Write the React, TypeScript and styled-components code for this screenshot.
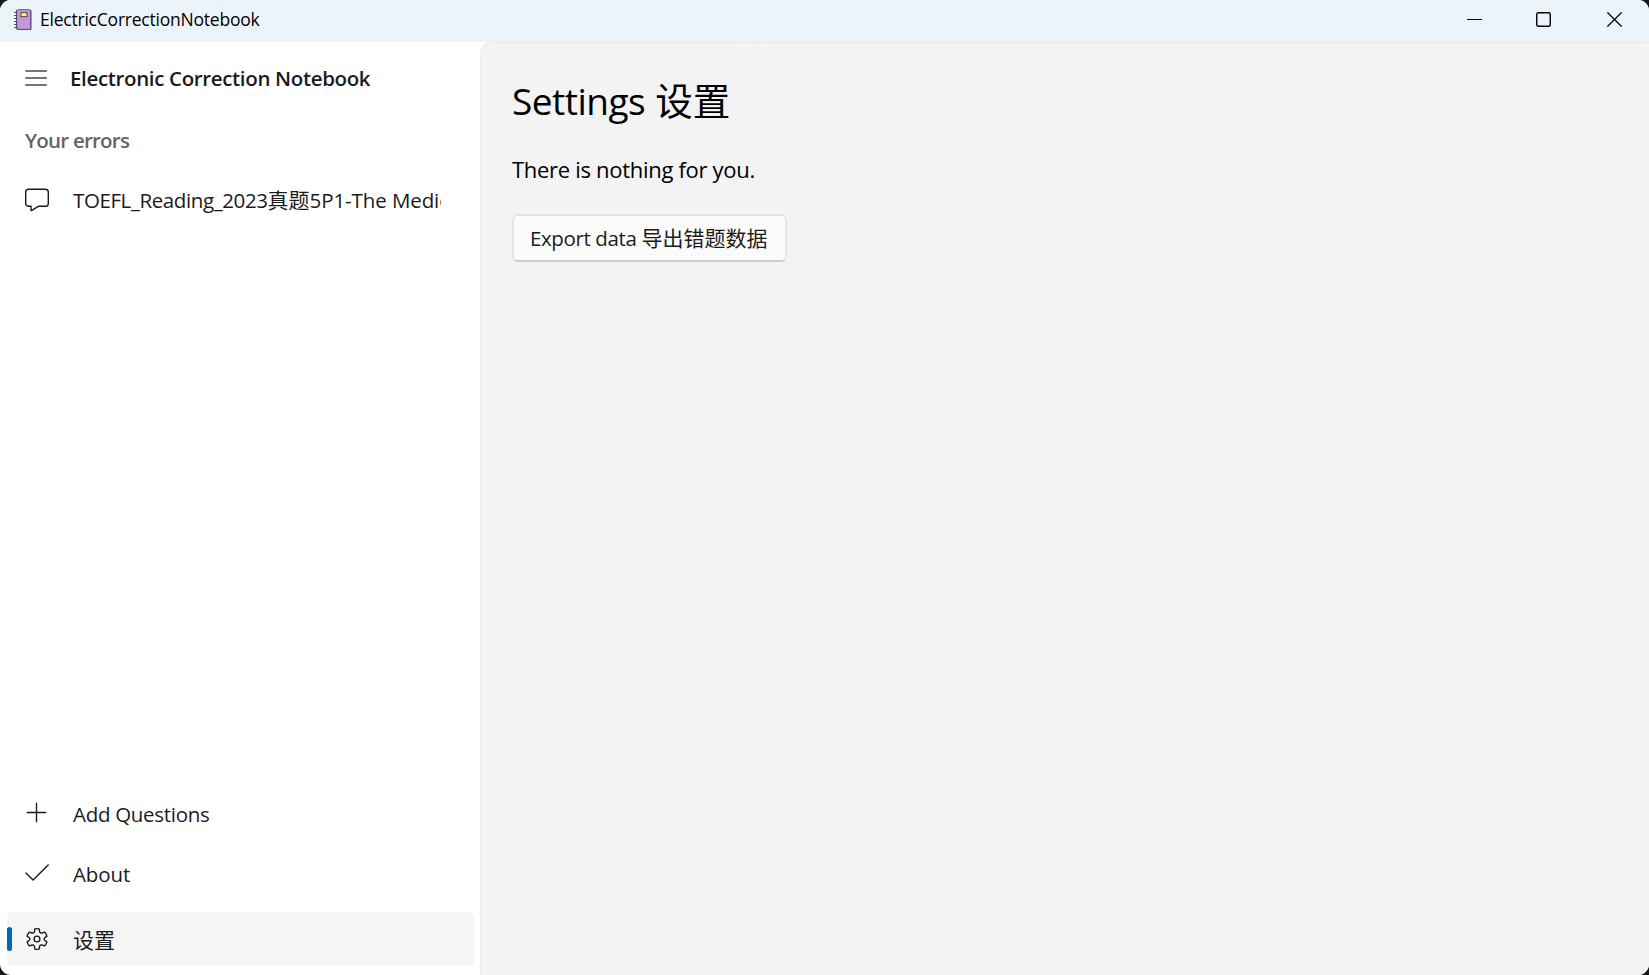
import React from "react";
import styled, { createGlobalStyle } from "styled-components";

const GlobalStyle = createGlobalStyle`
  * { box-sizing: border-box; }
  body { margin: 0; background: #17181c; overflow: hidden; }
  button { font: inherit; color: inherit; border: 0; background: none; padding: 0; margin: 0; text-align: left; }
  svg { display: block; flex: none; }
`;

const Window = styled.div`
  width: 100vw;
  height: 100vh;
  display: flex;
  flex-direction: column;
  overflow: hidden;
  border-radius: 11px;
  background: #fff;
  color: #1b1b1b;
  font-family: "Open Sans", "Noto Sans CJK SC", sans-serif;
`;

const TitleBar = styled.header`
  flex: none;
  height: 42px;
  display: flex;
  justify-content: space-between;
  background: linear-gradient(90deg, #ecf4fa, #ebf3fb 45%, #ebf4fa);
`;

const AppIdentity = styled.div`
  height: 39px;
  display: flex;
  align-items: center;
  gap: 7px;
  padding-left: 13px;
`;

const Text = styled.span<{ $size: number; $spacing?: number; $weight?: number; $color?: string }>`
  font-size: ${(p) => p.$size}px;
  letter-spacing: ${(p) => p.$spacing ?? 0}px;
  font-weight: ${(p) => p.$weight ?? 400};
  color: ${(p) => p.$color ?? "#1b1b1b"};
  line-height: 1.2;
  white-space: nowrap;
`;

const Cjk = styled.span<{ $size: number; $lead?: number }>`
  font-family: "Noto Sans CJK SC", sans-serif;
  font-size: ${(p) => p.$size}px;
  margin-left: ${(p) => p.$lead ?? 0}px;
  letter-spacing: 0;
  line-height: 1;
`;

const WindowControls = styled.div`
  display: flex;
  align-items: center;
  height: 39px;
  padding-right: 27px;
`;

const ControlButton = styled.button<{ $gap?: number }>`
  width: 15px;
  height: 39px;
  margin-right: ${(p) => p.$gap ?? 0}px;
  display: flex;
  align-items: center;
  justify-content: center;
`;

const Body = styled.div`
  flex: 1;
  min-height: 0;
  display: flex;
`;

const Sidebar = styled.nav`
  flex: none;
  width: 480px;
  display: flex;
  flex-direction: column;
  padding: 6px 6px 6px 7px;
`;

const PaneHeader = styled.div`
  height: 60px;
  display: flex;
  align-items: center;
  gap: 22px;
  padding-left: 18px;
`;

const SectionTitle = styled.div`
  height: 62px;
  display: flex;
  align-items: center;
  padding: 2px 0 0 18px;
`;

const Spacer = styled.div`
  flex: 1;
`;

const NavItem = styled.button<{ $selected?: boolean }>`
  flex: none;
  width: 467px;
  height: 54px;
  margin: ${(p) => (p.$selected ? "8px 0 3px" : "3px 0")};
  display: flex;
  align-items: center;
  border-radius: 6px;
  background: ${(p) => (p.$selected ? "#f5f5f5" : "transparent")};
`;

const Indicator = styled.span<{ $visible?: boolean }>`
  width: 5px;
  height: 24px;
  border-radius: 2.5px;
  background: ${(p) => (p.$visible ? "#0067c0" : "transparent")};
`;

const IconSlot = styled.span`
  width: 24px;
  margin: 0 24px 0 13px;
  display: flex;
`;

const NavLabel = styled.span`
  width: 368px;
  height: 40px;
  overflow: hidden;
  display: flex;
  align-items: center;
`;

const Content = styled.main`
  flex: 1;
  display: flex;
  flex-direction: column;
  align-items: flex-start;
  padding: 31px 31px 0;
  background: #f3f3f3;
  border: solid #e9e9e9;
  border-width: 1px 0 0 1px;
  border-top-left-radius: 12px;
`;

const Title = styled.h1`
  margin: 0;
  height: 54px;
  display: flex;
  align-items: center;
`;

const Message = styled.p`
  margin: 24px 0 0;
  height: 34px;
  display: flex;
  align-items: center;
`;

const ExportButton = styled.button`
  width: 275px;
  height: 48px;
  margin-top: 28px;
  padding-left: 16px;
  display: flex;
  align-items: center;
  background: #fbfbfb;
  border: 2px solid #e5e5e5;
  border-bottom-color: #cccccc;
  border-radius: 6px;
`;

const NotebookIcon = () => (
  <svg width="20" height="22" viewBox="0 0 20 22">
    <rect x="3.5" y="0.7" width="14.2" height="19.8" rx="1.2" fill="#be9ade" stroke="#6d5287" />
    <path d="M17.9 1.4V20.4H4" fill="none" stroke="#60456f" strokeWidth="1" />
    <rect x="8" y="3.6" width="6" height="4" fill="#fff06c" stroke="#5a4a3c" />
    <path d="M1 3.5H4.5M1 6.5H4.5M1 9.5H4.5M1 12.5H4.5M1 15.5H4.5M1 18.5H4.5" stroke="#555" strokeWidth="1.2" />
    <path d="M3.5 1V20" stroke="#534268" strokeWidth="1" strokeDasharray="2 1" />
  </svg>
);

const MinimizeIcon = () => (
  <svg width="15" height="15" viewBox="0 0 15 15">
    <path d="M0 7.5H15" stroke="#000" />
  </svg>
);

const MaximizeIcon = () => (
  <svg width="15" height="15" viewBox="0 0 15 15">
    <rect x="0.75" y="0.75" width="13.5" height="13.5" rx="1.5" fill="none" stroke="#000" strokeWidth="1.4" />
  </svg>
);

const CloseIcon = () => (
  <svg width="15" height="15" viewBox="0 0 15 15">
    <path d="M0.4 0.4L14.6 14.6M14.6 0.4L0.4 14.6" stroke="#000" strokeWidth="1.3" />
  </svg>
);

const MenuIcon = () => (
  <svg width="23" height="18" viewBox="0 0 23 18">
    <path d="M0.8 2H21.4M0.8 9H21.4M0.8 16H21.4" stroke="#4a4a4a" strokeWidth="1.4" strokeLinecap="round" />
  </svg>
);

const navIcon = {
  width: 24,
  height: 24,
  viewBox: "0 0 24 24",
  fill: "none",
  stroke: "#1b1b1b",
  strokeWidth: 1.4,
  strokeLinejoin: "round" as const,
  strokeLinecap: "round" as const,
};

const CommentIcon = () => (
  <svg {...navIcon}>
    <path d="M3.6 1.2H20.4A2.9 2.9 0 0 1 23.3 4.1V15.4A2.9 2.9 0 0 1 20.4 18.3H13.3L6.8 22.4Q6 22.8 6 22V18.3H3.6A2.9 2.9 0 0 1 0.7 15.4V4.1A2.9 2.9 0 0 1 3.6 1.2Z" />
  </svg>
);

const AddIcon = () => (
  <svg {...navIcon}>
    <path d="M11.5 1.3V19.7M2.3 10.5H20.7" />
  </svg>
);

const AcceptIcon = () => (
  <svg {...navIcon}>
    <path d="M0.9 10.9L8.1 18L23.2 3" />
  </svg>
);

const SettingsIcon = () => (
  <svg {...navIcon} strokeWidth="1.4">
    <path
      transform="translate(0 1)"
      d="M9.9 0.9Q12 0.4 14.1 0.9L14.6 3.7A1.7 1.7 0 0 0 16.9 5L19.6 4.1Q21.3 5.8 21.9 8.1L19.7 9.8A1.6 1.6 0 0 0 19.7 12.2L21.9 13.9Q21.3 16.2 19.6 17.9L16.9 17A1.7 1.7 0 0 0 14.6 18.3L14.1 21.1Q12 21.6 9.9 21.1L9.4 18.3A1.7 1.7 0 0 0 7.1 17L4.4 17.9Q2.7 16.2 2.1 13.9L4.3 12.2A1.6 1.6 0 0 0 4.3 9.8L2.1 8.1Q2.7 5.8 4.4 4.1L7.1 5A1.7 1.7 0 0 0 9.4 3.7Z"
    />
    <circle cx="12" cy="12" r="2.9" />
  </svg>
);

export default function App() {
  return (
    <>
      <GlobalStyle />
      <Window>
        <TitleBar>
          <AppIdentity>
            <NotebookIcon />
            <Text $size={17.5} $spacing={-0.22} $color="#000">ElectricCorrectionNotebook</Text>
          </AppIdentity>
          <WindowControls>
            <ControlButton aria-label="Minimize" $gap={54}><MinimizeIcon /></ControlButton>
            <ControlButton aria-label="Maximize" $gap={56}><MaximizeIcon /></ControlButton>
            <ControlButton aria-label="Close"><CloseIcon /></ControlButton>
          </WindowControls>
        </TitleBar>
        <Body>
          <Sidebar>
            <PaneHeader>
              <MenuIcon />
              <Text $size={20.5} $spacing={-0.35} $weight={600}>Electronic Correction Notebook</Text>
            </PaneHeader>
            <SectionTitle>
              <Text $size={20.5} $spacing={-0.78} $weight={600} $color="#646464">Your errors</Text>
            </SectionTitle>
            <NavItem>
              <Indicator />
              <IconSlot><CommentIcon /></IconSlot>
              <NavLabel>
                <Text $size={20.5} $spacing={-0.4}>
                  TOEFL_Reading_2023<Cjk $size={21}>真题</Cjk>
                  <Text $size={20.5} $spacing={-0.09}>5P1-The Medie</Text>
                </Text>
              </NavLabel>
            </NavItem>
            <Spacer />
            <NavItem>
              <Indicator />
              <IconSlot><AddIcon /></IconSlot>
              <NavLabel><Text $size={20.5} $spacing={-0.3}>Add Questions</Text></NavLabel>
            </NavItem>
            <NavItem>
              <Indicator />
              <IconSlot><AcceptIcon /></IconSlot>
              <NavLabel><Text $size={20.5} $spacing={-0.1}>About</Text></NavLabel>
            </NavItem>
            <NavItem $selected>
              <Indicator $visible />
              <IconSlot><SettingsIcon /></IconSlot>
              <NavLabel><Cjk $size={21}>设置</Cjk></NavLabel>
            </NavItem>
          </Sidebar>
          <Content>
            <Title>
              <Text $size={37} $spacing={-0.5} $color="#000">Settings <Cjk $size={37.5} $lead={1}>设置</Cjk></Text>
            </Title>
            <Message>
              <Text $size={22} $spacing={-0.3} $color="#000">There is nothing for you.</Text>
            </Message>
            <ExportButton>
              <Text $size={20.5} $spacing={-0.38}>Export data <Cjk $size={21}>导出错题数据</Cjk></Text>
            </ExportButton>
          </Content>
        </Body>
      </Window>
    </>
  );
}
